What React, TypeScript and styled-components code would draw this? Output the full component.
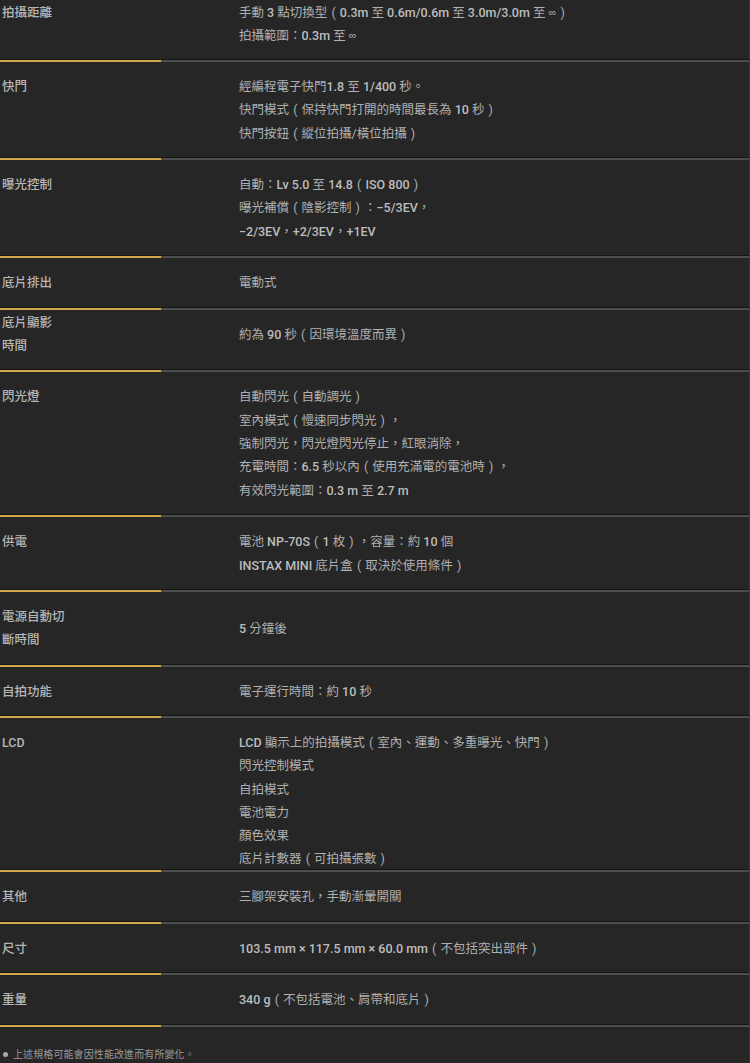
import React from "react";
import styled, { createGlobalStyle } from "styled-components";

const Global = createGlobalStyle`
  html, body { margin: 0; padding: 0; background: #262626; }
  body { font-family: Roboto, "Noto Sans CJK TC", "Noto Sans", sans-serif; }
`;

const Page = styled.div`
  width: 750px;
  min-height: 1063px;
  box-sizing: border-box;
  background: #262626;
  border-right: 1px solid #363636;
`;

const Table = styled.div`
  display: flex;
  flex-direction: column;
`;

const Row = styled.div`
  display: grid;
  grid-template-columns: 161px 1fr;
`;

const Cell = styled.div<{ $pt: number; $pb: number }>`
  box-sizing: border-box;
  padding-top: ${(p) => p.$pt}px;
  padding-bottom: ${(p) => p.$pb}px;
  background-image: linear-gradient(to top, #151515 0 1px, transparent 1px);
`;

const Label = styled(Cell)`
  padding-left: 2px;
  border-bottom: 2px solid #d3a54b;
  color: #b6b6b6;
  font-size: 12.5px;
  font-weight: 500;
  line-height: 23.4px;
`;

const Value = styled(Cell)<{ $lh: number }>`
  padding-left: 78px;
  border-bottom: 2px solid #4e4e4e;
  color: #b0b0b0;
  font-size: 12.5px;
  line-height: ${(p) => p.$lh}px;
  display: flex;
  flex-direction: column;
  justify-content: center;
`;

const Line = styled.div`
  white-space: nowrap;
  height: 1lh;
  overflow: visible;
`;

const Num = styled.span`
  font-weight: 500;
  color: #bdbdbd;
`;

const Paren = styled.span`
  display: inline-block;
  width: 1em;
  text-align: center;
  vertical-align: top;
`;

const Inf = styled.span`
  display: inline-block;
  vertical-align: top;
  font-family: "Liberation Sans", sans-serif;
  font-size: 11px;
`;

const Note = styled.div`
  display: flex;
  align-items: center;
  gap: 5px;
  padding: 21px 0 0 3px;
  color: #9a9a9a;
  font-size: 10px;
  line-height: 14px;
  letter-spacing: 0.1px;
`;

const Dot = styled.span`
  width: 5px;
  height: 5px;
  border-radius: 50%;
  background: #a8a8a8;
  flex: none;
`;

const rich = (s: string) => {
  const re = /([−+]?[A-Za-z0-9](?:[A-Za-z0-9.\/\-× ]*[A-Za-z0-9])?|（|）|∞)/g;
  const parts = s.split(re);
  return parts.map((p, i) => {
    if (i % 2 === 0) return <React.Fragment key={i}>{p}</React.Fragment>;
    if (p === "（") return <Paren key={i}>(</Paren>;
    if (p === "）") return <Paren key={i}>)</Paren>;
    if (p === "∞") return <Inf key={i}>∞</Inf>;
    return <Num key={i}>{p}</Num>;
  });
};

type Spec = {
  label: string[];
  lines: string[];
  pt?: number;
  pb?: number;
  lh?: number;
};

const specs: Spec[] = [
  {
    label: ["拍攝距離"],
    lines: ["手動 3 點切換型（0.3m 至 0.6m/0.6m 至 3.0m/3.0m 至 ∞）", "拍攝範圍：0.3m 至 ∞"],
    pt: 1,
    pb: 12,
  },
  {
    label: ["快門"],
    lines: ["經編程電子快門1.8 至 1/400 秒。", "快門模式（保持快門打開的時間最長為 10 秒）", "快門按鈕（縱位拍攝/橫位拍攝）"],
  },
  {
    label: ["曝光控制"],
    lines: ["自動：Lv 5.0 至 14.8（ISO 800）", "曝光補償（陰影控制）：−5/3EV，", "−2/3EV，+2/3EV，+1EV"],
  },
  { label: ["底片排出"], lines: ["電動式"] },
  { label: ["底片顯影", "時間"], lines: ["約為 90 秒（因環境溫度而異）"], pt: 1.5, pb: 12.5 },
  {
    label: ["閃光燈"],
    lines: [
      "自動閃光（自動調光）",
      "室內模式（慢速同步閃光），",
      "強制閃光，閃光燈閃光停止，紅眼消除，",
      "充電時間：6.5 秒以內（使用充滿電的電池時），",
      "有效閃光範圍：0.3 m 至 2.7 m",
    ],
  },
  { label: ["供電"], lines: ["電池 NP-70S（1 枚），容量：約 10 個", "INSTAX MINI 底片盒（取決於使用條件）"] },
  { label: ["電源自動切", "斷時間"], lines: ["5 分鐘後"] },
  { label: ["自拍功能"], lines: ["電子運行時間：約 10 秒"] },
  {
    label: ["LCD"],
    lines: [
      "LCD 顯示上的拍攝模式（室內、運動、多重曝光、快門）",
      "閃光控制模式",
      "自拍模式",
      "電池電力",
      "顏色效果",
      "底片計數器（可拍攝張數）",
    ],
    pb: 0,
    lh: 23.2,
  },
  { label: ["其他"], lines: ["三腳架安裝孔，手動漸暈開關"] },
  { label: ["尺寸"], lines: ["103.5 mm × 117.5 mm × 60.0 mm（不包括突出部件）"] },
  { label: ["重量"], lines: ["340 g（不包括電池、肩帶和底片）"] },
];

export default function App() {
  return (
    <Page>
      <Global />
      <Table>
        {specs.map((s, i) => {
          const pt = s.pt ?? 13;
          const pb = s.pb ?? 13;
          const lh = s.lh ?? 23.4;
          return (
            <Row key={i}>
              <Label $pt={pt} $pb={pb}>
                {s.label.map((l, j) => (
                  <Line key={j}>{l}</Line>
                ))}
              </Label>
              <Value $pt={pt} $pb={pb} $lh={lh}>
                {s.lines.map((l, j) => (
                  <Line key={j}>{rich(l)}</Line>
                ))}
              </Value>
            </Row>
          );
        })}
      </Table>
      <Note>
        <Dot />
        <span>上述規格可能會因性能改進而有所變化。</span>
      </Note>
    </Page>
  );
}
